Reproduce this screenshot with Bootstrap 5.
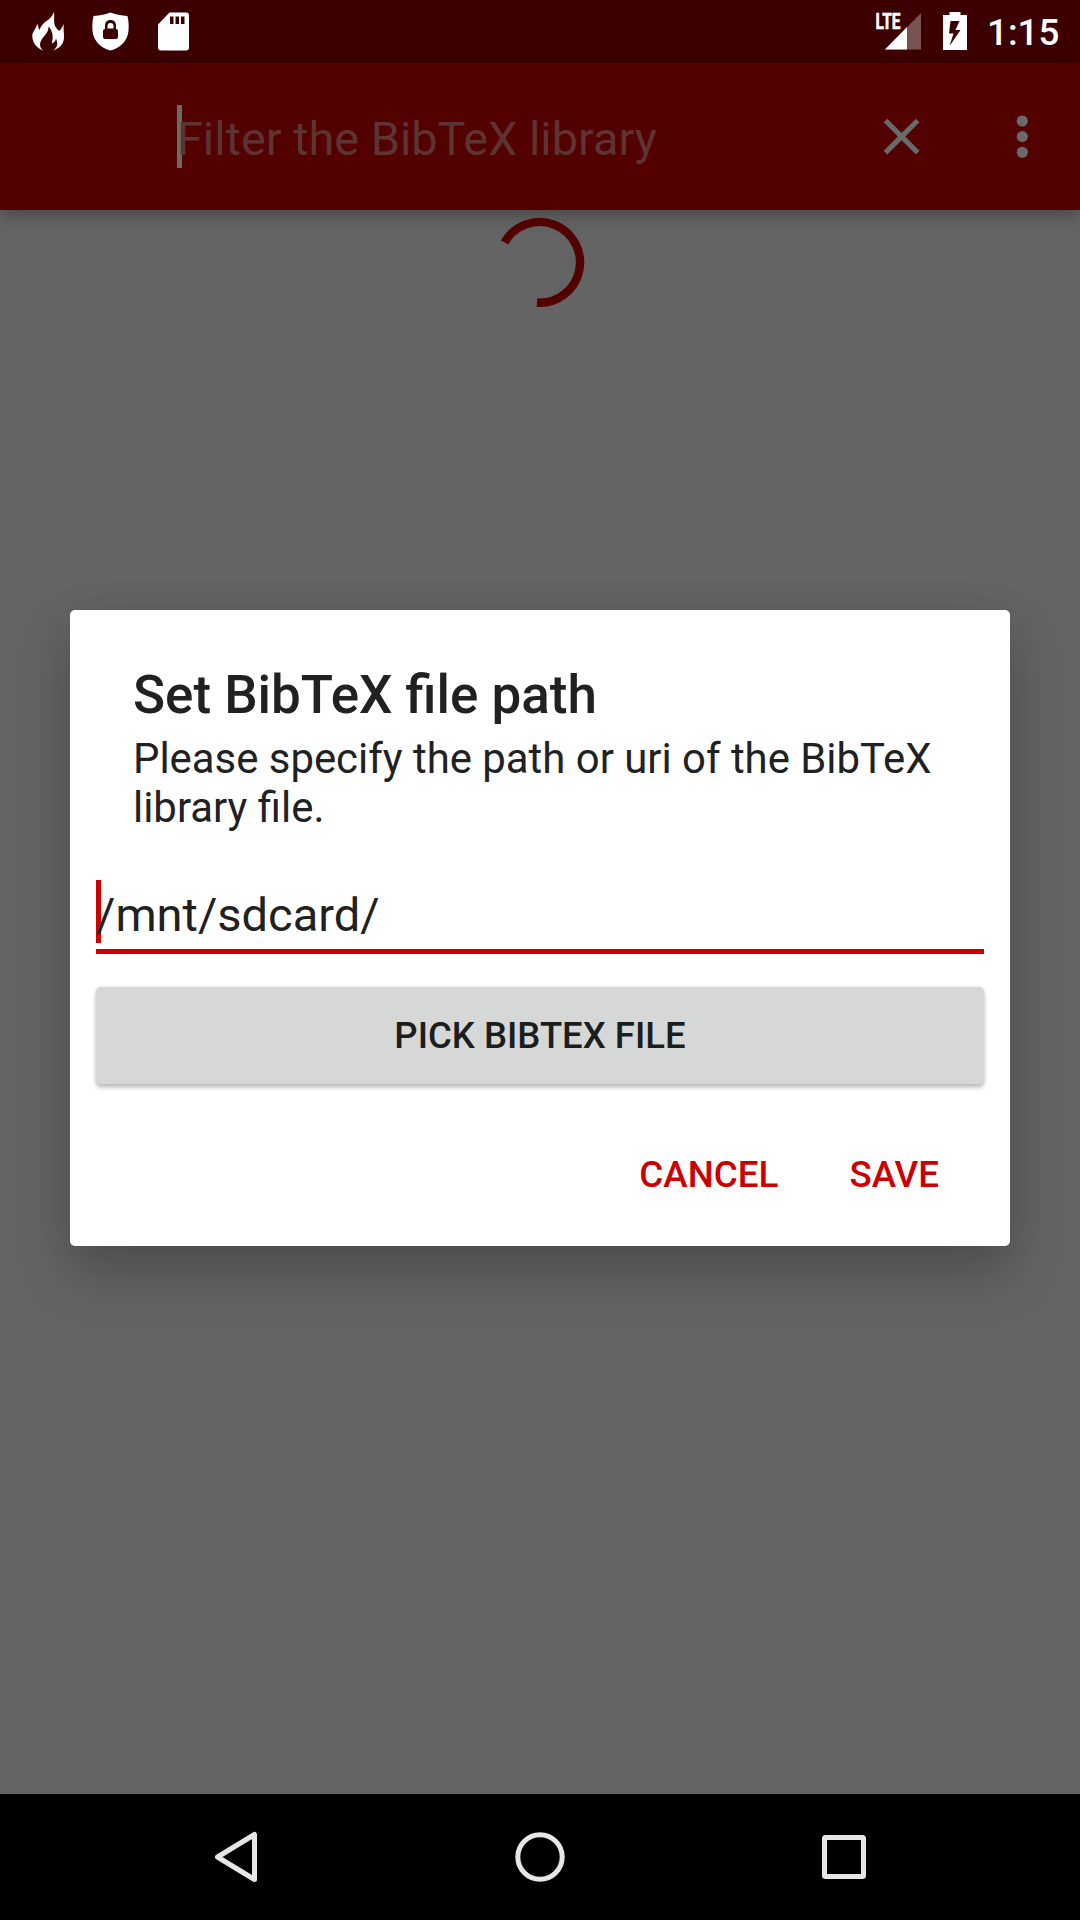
<!DOCTYPE html>
<html lang="en">
<head>
<meta charset="utf-8">
<meta name="viewport" content="width=device-width, initial-scale=1">
<title>BibTeX library</title>
<link href="https://cdn.jsdelivr.net/npm/bootstrap@5.3.0/dist/css/bootstrap.min.css" rel="stylesheet">
<style>
  body { font-family: Roboto, "Liberation Sans", sans-serif; background: #646464; line-height: 1.172; color: #212121; }
  svg { display: block; flex: none; }
  .screen { height: 1920px; width: 1080px; }
  .status-bar { height: 63px; background: #3d0000; color: #fff; }
  .clock { font-size: 36.75px; font-weight: 500; line-height: 43px; width: 100px; padding: 11px 0 0 7px; }
  .tool-bar { height: 147px; background: #520000; padding-left: 177px; box-shadow: 0 6px 18px rgba(0,0,0,.22), 0 2px 10px rgba(0,0,0,.1); }
  .field { height: 63px; font-size: 47px; line-height: 69px; }
  .caret { top: 0; left: 0; width: 5px; height: 63px; }
  .filter-field { color: #5e3333; width: 640px; font-size: 46.8px; }
  .filter-field .caret { background: #6a6a6a; }
  .overlay { top: 63px; left: 0; right: 0; bottom: 126px; padding-bottom: 1px; }
  .dialog-box { width: 940px; height: 636px; border-radius: 5px; padding: 54px 26px 0; background: #fff; box-shadow: 0 28px 56px rgba(0,0,0,.21), 0 0 40px rgba(0,0,0,.06); }
  .dialog-text { padding: 0 37px; }
  .dialog-title { font-size: 52.95px; font-weight: 500; line-height: 62px; margin: 0 0 8px; }
  .dialog-message { font-size: 41.88px; line-height: 49px; margin: 0; }
  .path-field { margin-top: 48px; height: 74px; border-bottom: 5px solid #c00; }
  .path-field .caret { background: #c00; }
  .btn-pick { margin-top: 33px; height: 97px; padding-top: 8px; border: 0; border-radius: 5px; background: #d6d8d7; color: #1c1d1d; font-size: 36.5px; font-weight: 500; box-shadow: 0 4px 4px rgba(0,0,0,.22), 0 0 4px rgba(0,0,0,.12); }
  .dialog-actions { margin-top: 38px; padding-right: 24px; gap: 29px; }
  .btn-flat { height: 105px; padding: 0 21px; border: 0; color: #c00; font-size: 36.75px; font-weight: 500; }
  .progress-ring { padding-top: 7px; }
  .nav-keys { height: 126px; background: #000; }
</style>
</head>
<body>
<div class="screen position-relative d-flex flex-column overflow-hidden">
  <header class="status-bar d-flex justify-content-between align-items-start">
    <svg width="240" height="63" viewBox="0 0 240 63" fill="#fff">
      <path d="M54 12C55 19 52 24 58 30C60 32 61 29 64 24C63 29 64 32 64 37C64 44 60 48 53 50.6C58 47 58 43 56 38.5C55.5 41 54 43 51.7 43.5C54 36 52 30 48.5 26.5C49 34 41 37 40 44C40 47 41 49 43.5 50.6C36 48 32 42 32.3 35C33 31 36 29 37.3 23.5C38 26 38.5 28 39.5 30C43 20 50 22 54 12Z"/>
      <path fill-rule="evenodd" d="M110.5 12.5C115 14.5 121 15.5 127.5 16C129 22 129 29 128 34C126 42 120 48 110.5 50.6C101 48 95 42 93 34C92 29 92 22 93.5 16C100 15.5 106 14.5 110.5 12.5ZM105 29Q103 29 103 31V37Q103 39 105 39H116Q118 39 118 37V31Q118 29 116 29V26C116 22 114 20 110.5 20S105 22 105 26ZM107.5 28.5V26C107.5 24 108.5 23 110.5 23S113.5 24 113.5 26V28.5Z"/>
      <path fill-rule="evenodd" d="M169.5 12.5H186Q189 12.5 189 15.5V47.5Q189 50.5 186 50.5H161Q158 50.5 158 47.5V24.5ZM170 16.5V24H173.5V16.5ZM175.5 16.5V24H179V16.5ZM181 16.5V24H184.5V16.5Z"/>
    </svg>
    <div class="d-flex">
      <svg width="107" height="63" viewBox="873 0 107 63" fill="#fff">
        <text x="875.5" y="29" font-size="22" font-weight="700" textLength="25" lengthAdjust="spacingAndGlyphs" stroke="#fff" stroke-width=".6">LTE</text>
        <path d="M921 13V49.5H885Z" opacity=".32"/>
        <path d="M907 27V49.5H885Z"/>
        <path fill-rule="evenodd" d="M949.5 12H960.5V15H967V50H943V15H949.5ZM950.5 21L949 33.5H953.5L949.5 46L960.5 30H955.5L959.5 21Z"/>
      </svg>
      <div class="clock">1:15</div>
    </div>
  </header>
  <nav class="tool-bar d-flex align-items-start justify-content-between">
    <div class="field filter-field position-relative mt-auto mb-auto"><span class="caret position-absolute"></span><span class="position-relative">Filter the BibTeX library</span></div>
    <svg width="220" height="147" viewBox="860 63 220 147" fill="#6a6a6a">
      <path d="M885.5 120.500L917.700 152.700M917.700 120.500L885.500 152.700" stroke="#6a6a6a" stroke-width="5.2"/>
      <circle cx="1022.3" cy="121" r="5.6"/><circle cx="1022.3" cy="136.6" r="5.6"/><circle cx="1022.3" cy="152.3" r="5.6"/>
    </svg>
  </nav>
  <main class="flex-grow-1">
    <div class="progress-ring d-flex justify-content-center">
      <svg width="92" height="92" viewBox="494.5 217 92 92"><path d="M505 242.400A40.400 40.400 0 1 1 537.500 302.700" fill="none" stroke="#520000" stroke-width="8.4"/></svg>
    </div>
  </main>
  <footer class="nav-keys">
    <svg width="1080" height="126" viewBox="0 1794 1080 126" fill="none" stroke="#e6e6e6" stroke-width="5" stroke-linejoin="round">
      <path d="M254.5 1834.5V1879.5L217.5 1857Z"/>
      <circle cx="540" cy="1857" r="22.2"/>
      <rect x="824.5" y="1837.5" width="39" height="39" rx="1"/>
    </svg>
  </footer>
  <div class="overlay position-absolute d-flex align-items-center justify-content-center">
    <section class="dialog-box" role="dialog" aria-labelledby="dialogTitle">
      <div class="dialog-text">
        <h1 class="dialog-title" id="dialogTitle">Set BibTeX file path</h1>
        <p class="dialog-message">Please specify the path or uri of the BibTeX library file.</p>
      </div>
      <div class="field path-field position-relative"><span class="caret position-absolute"></span><span class="position-relative">/mnt/sdcard/</span></div>
      <button type="button" class="btn btn-pick d-block w-100">PICK BIBTEX FILE</button>
      <div class="dialog-actions d-flex justify-content-end">
        <button type="button" class="btn btn-flat">CANCEL</button>
        <button type="button" class="btn btn-flat">SAVE</button>
      </div>
    </section>
  </div>
</div>
<script src="https://cdn.jsdelivr.net/npm/bootstrap@5.3.0/dist/js/bootstrap.bundle.min.js"></script>
</body>
</html>
